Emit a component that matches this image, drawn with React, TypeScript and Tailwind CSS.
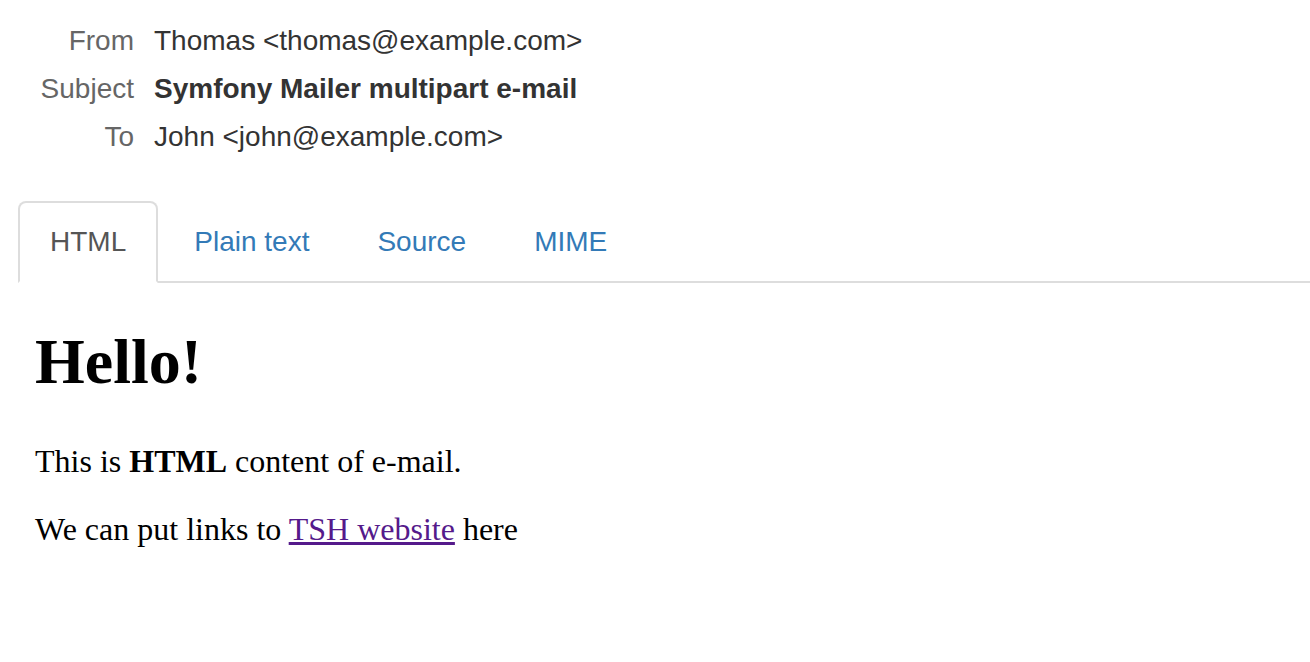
import React from 'react';

const headers = [
  { label: 'From', value: 'Thomas <thomas@example.com>', bold: false },
  { label: 'Subject', value: 'Symfony Mailer multipart e-mail', bold: true },
  { label: 'To', value: 'John <john@example.com>', bold: false },
];

const tabs = ['HTML', 'Plain text', 'Source', 'MIME'];

const App = () => {
  return (
    <div className="min-h-screen bg-white font-['Liberation_Sans',Arial,sans-serif] text-[28px]">
      <div className="pt-[17px]">
        {headers.map((h) => (
          <div key={h.label} className="flex py-1 leading-[40px]">
            <div className="w-[134px] shrink-0 text-right text-[#666]">{h.label}</div>
            <div className={`pl-[20px] text-[#333] ${h.bold ? 'font-bold' : ''}`}>{h.value}</div>
          </div>
        ))}
      </div>

      <div className="mt-[40px] pl-[18px]">
        <ul className="flex border-b-2 border-[#ddd]">
          {tabs.map((t, i) => (
            <li key={t} className="-mb-[2px] mr-[4px]">
              {i === 0 ? (
                <span className="block rounded-t-[8px] border-2 border-[#ddd] border-b-transparent bg-white px-[30px] py-[19px] leading-[40px] text-[#555]">
                  {t}
                </span>
              ) : (
                <a href="#" className="block border-2 border-transparent px-[30px] py-[19px] leading-[40px] text-[#337ab7]">
                  {t}
                </a>
              )}
            </li>
          ))}
        </ul>

        <div className="pl-[17px] font-['Liberation_Serif','Times_New_Roman',serif] text-black">
          <h1 className="mt-[43px] text-[64px] font-bold leading-[72px]">Hello!</h1>
          <p className="mt-[45px] text-[32px] leading-[36px]">
            This is <b>HTML</b> content of e-mail.
          </p>
          <p className="mt-[32px] text-[32px] leading-[36px]">
            We can put links to{' '}
            <a href="#" className="text-[#551a8b] underline">
              TSH website
            </a>{' '}
            here
          </p>
        </div>
      </div>
    </div>
  );
};

export default App;
